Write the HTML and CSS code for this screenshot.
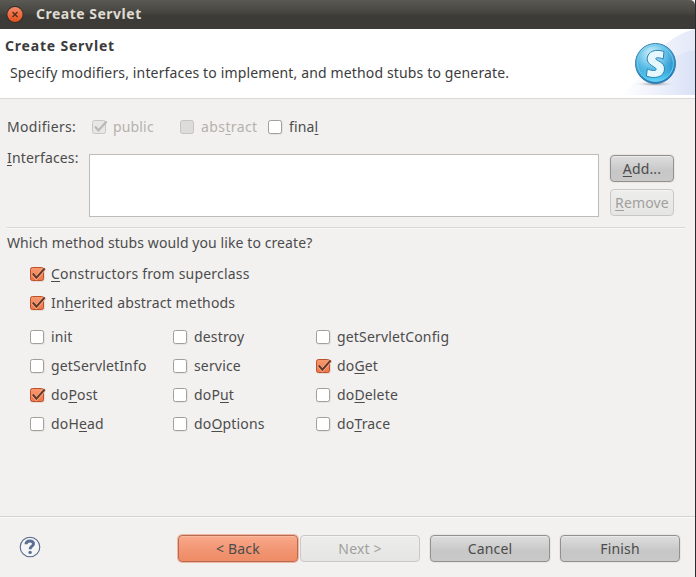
FILE: index.html
```html
<!DOCTYPE html>
<html lang="en">
<head>
<meta charset="utf-8">
<title>Create Servlet</title>
<link rel="stylesheet" href="styles.css">
</head>
<body>
<svg class="defs" width="0" height="0" aria-hidden="true">
  <defs>
    <linearGradient id="orange" x1="0" y1="0" x2="0" y2="1"><stop offset="0" stop-color="#f99a70"/><stop offset="1" stop-color="#ee7446"/></linearGradient>
    <symbol id="off" viewBox="0 0 17 16"><rect x="1" y="1" width="15" height="15" rx="3" fill="#e5e4e2"/><rect x="1.5" y="1.5" width="13" height="13" rx="2" fill="#fff" stroke="#a19f9a"/></symbol>
    <symbol id="on" viewBox="0 0 17 16"><rect x="1" y="1" width="15" height="15" rx="3" fill="#e9dcd6"/><rect x="1.5" y="1.5" width="13" height="13" rx="2" fill="url(#orange)" stroke="#b9512d"/><path d="M3.7 7.5L7.3 11.8L15.5 2.8" fill="none" stroke="#fbb08d" stroke-width="3.6"/><path d="M3.8 7.5L7.4 11.6L15.7 2.4" fill="none" stroke="#65382a" stroke-width="2.1"/></symbol>
    <symbol id="dim" viewBox="0 0 17 16"><rect x="1.5" y="1.5" width="13" height="13" rx="2" fill="#dddcda" stroke="#c5c4c1"/></symbol>
    <symbol id="dimon" viewBox="0 0 17 16"><rect x="1.5" y="1.5" width="13" height="13" rx="2" fill="#e8e7e5" stroke="#c8c7c5"/><path d="M4 7.5L7.4 11.4L15.6 2.5" fill="none" stroke="#bbb9b6" stroke-width="2.2"/></symbol>
  </defs>
</svg>
<div class="window">
  <div class="titlebar">
    <svg class="close" viewBox="0 0 18 18"><defs><linearGradient id="cl" x1="0" y1="0" x2="0" y2="1"><stop offset="0" stop-color="#f58a67"/><stop offset="1" stop-color="#e4501c"/></linearGradient></defs><circle cx="9" cy="8.5" r="8.5" fill="#302f2b"/><circle cx="9" cy="8.5" r="7.6" fill="url(#cl)"/><path d="M6.5 6L11.5 11M11.5 6L6.5 11" stroke="#512b1b" stroke-width="1.3"/></svg>
    <span class="t-title">Create Servlet</span>
  </div>
  <div class="header">
    <div class="heading">
      <div class="t-heading">Create Servlet</div>
      <div class="description">Specify modifiers, interfaces to implement, and method stubs to generate.</div>
    </div>
    <svg class="banner" viewBox="0 0 75 69">
      <defs>
        <linearGradient id="sw" x1="0" y1="0" x2="1" y2="0"><stop offset="0" stop-color="#fff"/><stop offset="1" stop-color="#e4e9f8"/></linearGradient>
        <linearGradient id="sw2" x1="0" y1="0" x2="1" y2="0"><stop offset="0" stop-color="#f8f9fe" stop-opacity=".2"/><stop offset="1" stop-color="#d9e1f6"/></linearGradient>
        <radialGradient id="ball" cx=".4" cy=".25" r=".85"><stop offset="0" stop-color="#d3f1fb"/><stop offset=".4" stop-color="#68c3e9"/><stop offset=".75" stop-color="#238cc8"/><stop offset="1" stop-color="#2376b8"/></radialGradient>
        <linearGradient id="low" x1="0" y1="0" x2="0" y2="1"><stop offset=".5" stop-color="#46c3ee" stop-opacity="0"/><stop offset="1" stop-color="#5ed8fa"/></linearGradient>
        <radialGradient id="sh"><stop offset="0" stop-color="#8b8b98"/><stop offset="1" stop-color="#ddd" stop-opacity="0"/></radialGradient>
      </defs>
      <path d="M0 66C24 55 29 12 75 0V66Z" fill="url(#sw)"/>
      <path d="M7 66C32 58 42 25 75 21V66Z" fill="url(#sw2)"/>
      <ellipse cx="35" cy="55" rx="20" ry="2.4" fill="url(#sh)"/>
      <circle cx="35.5" cy="34.5" r="20" fill="url(#ball)" stroke="#397fae" stroke-width="1"/>
      <circle cx="35.5" cy="34.5" r="17.9" fill="url(#low)" stroke="#75cceb" stroke-width="1"/>
      <path d="M44 22.5L43.2 30C39.5 28.5 35.8 28.3 35.7 29.7C35.8 31.6 44.7 32.7 44.5 40C44.3 48.5 34.4 50.1 26.4 47.1L27.3 39.8C31.5 41.9 36 42.1 36.2 40.4C36.4 37.8 27 36.4 27.2 29.7C27.6 21.8 36 19.8 44 22.5Z" fill="#e5f8fe" stroke="#2c80b4" stroke-width="1"/>
    </svg>
  </div>
  <div class="content">
    <div class="modifiers">
      <span class="t-mod">Modifiers:</span>
      <label class="opt disabled"><svg class="box"><use href="#dimon"/></svg><span>public</span></label>
      <label class="opt disabled"><svg class="box"><use href="#dim"/></svg><span class="t-abs">abs<u>t</u>ract</span></label>
      <label class="opt"><svg class="box"><use href="#off"/></svg><span>fina<u>l</u></span></label>
    </div>
    <div class="interfaces">
      <span class="caption"><u>I</u>nterfaces:</span>
      <div class="list"></div>
      <div class="actions">
        <button class="btn"><u>A</u>dd...</button>
        <button class="btn off"><u>R</u>emove</button>
      </div>
    </div>
    <hr class="rule">
    <div class="question">Which method stubs would you like to create?</div>
    <div class="inherited">
      <label class="opt"><svg class="box"><use href="#on"/></svg><span class="t-con"><u>C</u>onstructors from superclass</span></label>
      <label class="opt"><svg class="box"><use href="#on"/></svg><span>In<u>h</u>erited abstract methods</span></label>
    </div>
    <div class="stubs">
      <label class="opt"><svg class="box"><use href="#off"/></svg><span>init</span></label>
      <label class="opt"><svg class="box"><use href="#off"/></svg><span>destroy</span></label>
      <label class="opt"><svg class="box"><use href="#off"/></svg><span>getServletConfig</span></label>
      <label class="opt"><svg class="box"><use href="#off"/></svg><span>getServletInfo</span></label>
      <label class="opt"><svg class="box"><use href="#off"/></svg><span>service</span></label>
      <label class="opt"><svg class="box"><use href="#on"/></svg><span>do<u>G</u>et</span></label>
      <label class="opt"><svg class="box"><use href="#on"/></svg><span>do<u>P</u>ost</span></label>
      <label class="opt"><svg class="box"><use href="#off"/></svg><span>doP<u>u</u>t</span></label>
      <label class="opt"><svg class="box"><use href="#off"/></svg><span>do<u>D</u>elete</span></label>
      <label class="opt"><svg class="box"><use href="#off"/></svg><span>doH<u>e</u>ad</span></label>
      <label class="opt"><svg class="box"><use href="#off"/></svg><span>do<u>O</u>ptions</span></label>
      <label class="opt"><svg class="box"><use href="#off"/></svg><span>do<u>T</u>race</span></label>
    </div>
  </div>
  <div class="footer">
    <svg class="help" viewBox="0 0 22 22"><circle cx="11" cy="11" r="9.8" fill="#f5f5f6" stroke="#53678a" stroke-width="1.1"/><path d="M7 8.3C7.2 3.9 14.8 4.1 14.5 8C14.3 10.3 11.1 10.2 11.1 13.2" fill="none" stroke="#5b6f96" stroke-width="3"/><circle cx="11.1" cy="16.4" r="1.7" fill="#5b6f96"/></svg>
    <div class="buttons">
      <button class="btn back">&lt; Back</button>
      <button class="btn off">Next &gt;</button>
      <button class="btn">Cancel</button>
      <button class="btn">Finish</button>
    </div>
  </div>
</div>
</body>
</html>
```
FILE: styles.css
```css
* { box-sizing: border-box; }
body { margin: 0; background: #f2f1f0; }
.defs { display: block; }
.window { width: 696px; height: 577px; display: flex; flex-direction: column; border-right: 1px solid #292c30; background: #f2f1f0; color: #4c4c4c; font: 14px/20px "Noto Sans", sans-serif; letter-spacing: .16px; white-space: nowrap; }
u { text-decoration: underline 1px; text-underline-offset: 2px; text-decoration-skip-ink: none; }
.titlebar { height: 29px; flex: none; display: flex; align-items: center; padding-left: 6px; gap: 12px; background: linear-gradient(#5a5954, #45443f 45%, #3c3b37 55%, #3c3b37); color: #dfdbd2; font-weight: 700; border-radius: 0 5px 0 0; }
.t-title { letter-spacing: .5px; padding-bottom: 1px; }
.close { width: 18px; height: 18px; }
.header { height: 70px; flex: none; display: flex; justify-content: space-between; background: #fff; border-bottom: 1px solid #d9d8d7; color: #3c3c3c; }
.heading { padding: 7px 0 0 5px; }
.t-heading { font-weight: 700; letter-spacing: .8px; }
.description { padding: 7px 0 0 5px; letter-spacing: .145px; }
.banner { width: 75px; height: 69px; }
.content { height: 417px; flex: none; padding: 18px 10px 0 7px; }
.modifiers { display: grid; grid-template-columns: 84px 88px 88px 1fr; }
.t-mod { letter-spacing: .32px; }
.t-abs { letter-spacing: .4px; }
.t-con { letter-spacing: .2px; }
.opt { display: flex; align-items: center; height: 20px; gap: 5px; }
.box { width: 17px; height: 16px; flex: none; }
.opt.disabled { color: #b5b1ac; }
.interfaces { display: grid; grid-template-columns: 82px 510px 64px; margin-top: 17px; }
.interfaces .caption { margin-top: -6px; }
.list { height: 63px; background: #fff; border: 1px solid #bebcb8; }
.actions { margin-left: 11px; width: 64px; display: flex; flex-direction: column; gap: 7px; padding-top: 1px; }
.btn { font: inherit; letter-spacing: inherit; color: #4c4c4c; height: 27px; padding: 0; border: 1px solid #929190; border-radius: 4px; background: linear-gradient(#dedede, #c7c7c7 60%, #c9c9c9); box-shadow: inset 0 1px #eaeaea, 0 0 0 1px #e7e6e4; line-height: 24px; }
.btn.off { color: #a19f9c; border-color: #c9c8c7; background: linear-gradient(#ededec, #e5e5e4); box-shadow: inset 0 1px #f4f4f3; }
.rule { height: 2px; margin: 10px 0 0; border: 0; border-top: 1px solid #d8d7d5; background: #f9f9f8; }
.question { margin-top: 4px; letter-spacing: .09px; }
.inherited { margin: 11px 0 0 22px; display: grid; gap: 9px; }
.stubs { margin: 14px 0 0 22px; display: grid; grid-template-columns: 143px 143px 143px; row-gap: 9px; }
.footer { flex: 1; display: flex; align-items: flex-start; justify-content: space-between; border-top: 1px solid #d5d4d2; box-shadow: inset 0 1px #fafaf9; padding: 18px 15px 0 19px; }
.help { width: 22px; height: 22px; margin-top: 1px; }
.buttons { display: flex; gap: 10px; }
.buttons .btn { width: 120px; }
.buttons .back { margin-right: -8px; background: linear-gradient(#f9aa8b, #f19472 60%, #ee8c65); border-color: #b76b52; box-shadow: inset 0 1px #fbb99d, 0 0 0 1px #f0b6a1; }
```
